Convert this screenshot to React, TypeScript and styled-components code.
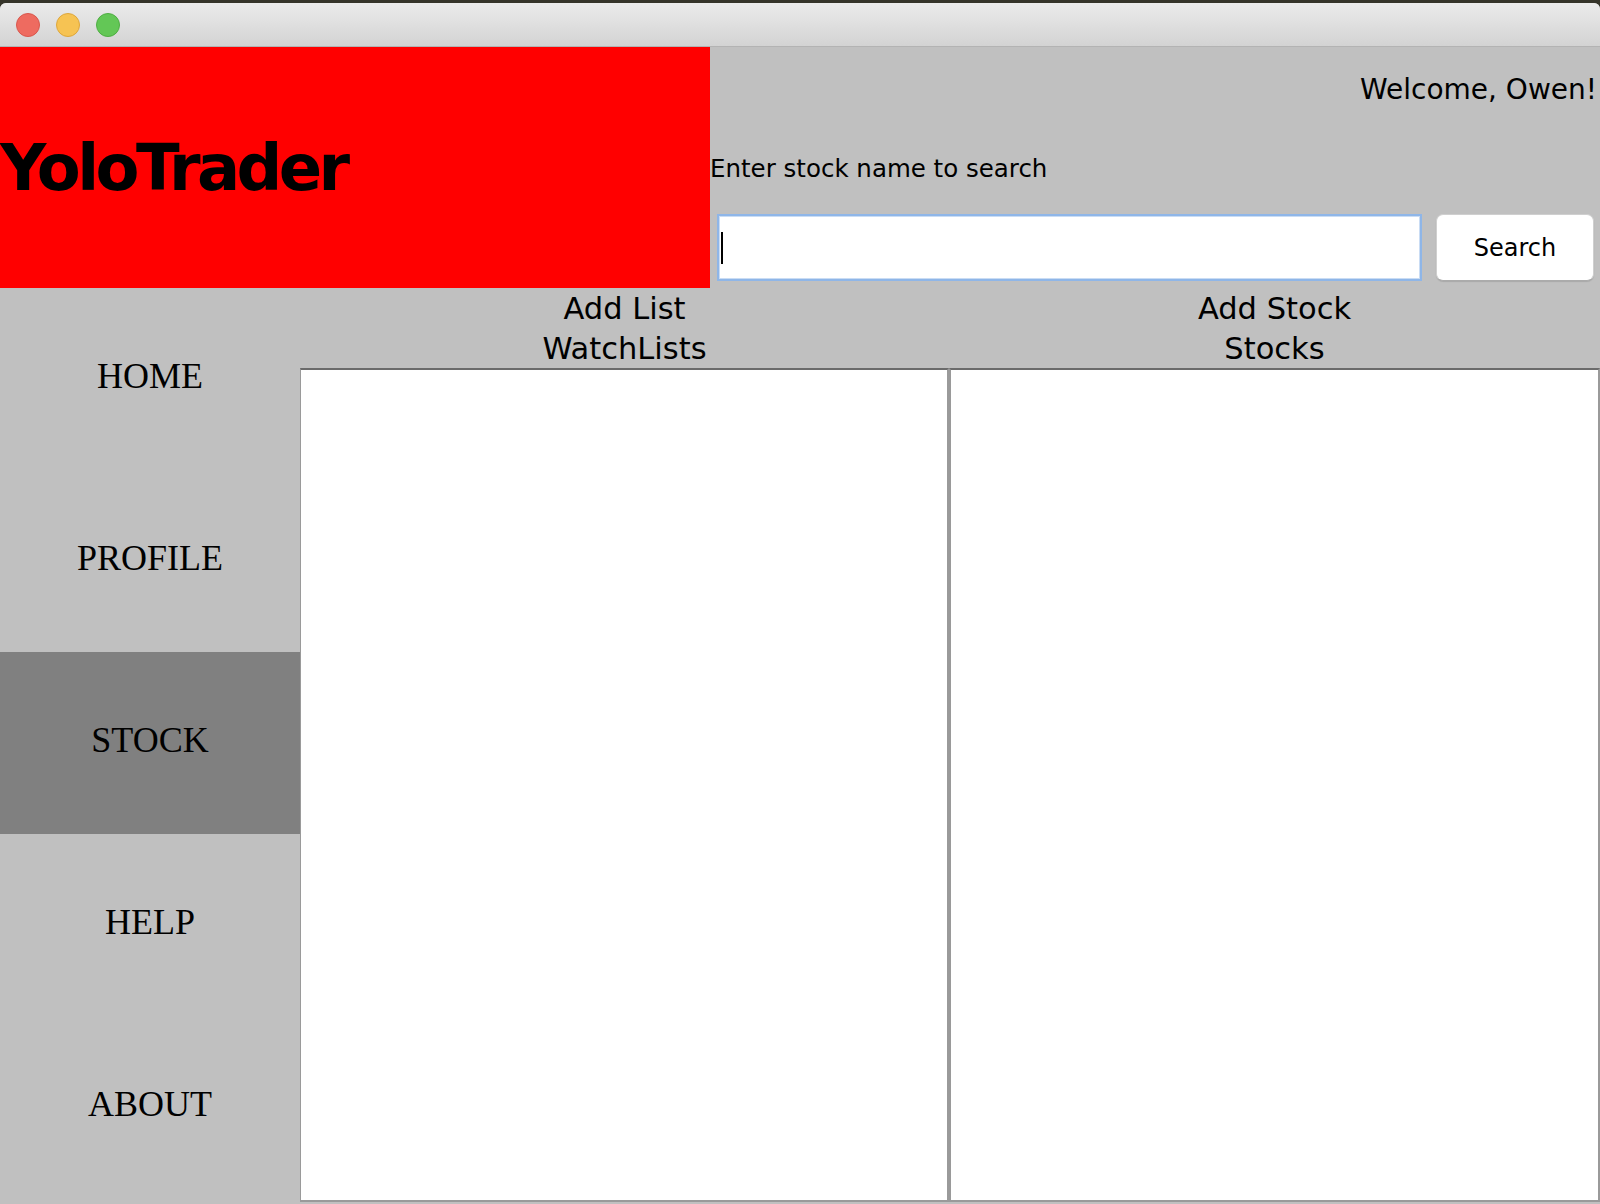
import styled, { createGlobalStyle } from 'styled-components'

const GlobalStyle = createGlobalStyle`
  html, body {
    margin: 0;
    padding: 0;
    background: #35342a;
  }
  * {
    box-sizing: border-box;
  }
`

const UI_FONT = `"DejaVu Sans", "Open Sans", sans-serif`

const Desktop = styled.div`
  width: 1600px;
  height: 1204px;
  padding-top: 3px;
  background: #35342a;
  overflow: hidden;
`

const Window = styled.div`
  height: 100%;
  display: flex;
  flex-direction: column;
  border-radius: 6px 6px 0 0;
  overflow: hidden;
  background: #c0c0c0;
`

const TitleBar = styled.div`
  height: 44px;
  flex-shrink: 0;
  display: flex;
  align-items: center;
  gap: 16px;
  padding-left: 16px;
  background: linear-gradient(#ebebeb, #d3d3d3);
  border-bottom: 1px solid #b3b3b3;
`

const Light = styled.span<{ $fill: string; $edge: string }>`
  width: 24px;
  height: 24px;
  border-radius: 50%;
  background: ${(p) => p.$fill};
  border: 1px solid ${(p) => p.$edge};
`

const Header = styled.div`
  height: 241px;
  flex-shrink: 0;
  display: grid;
  grid-template-columns: 710px 1fr;
`

const Brand = styled.div`
  background: #ff0000;
  display: flex;
  align-items: center;
`

const BrandName = styled.h1`
  margin: 0;
  font-family: ${UI_FONT};
  font-weight: bold;
  font-size: 64px;
  letter-spacing: -3.6px;
  color: #000;
`

const SearchPanel = styled.div`
  background: #c0c0c0;
  display: grid;
  grid-template-rows: repeat(3, 1fr);
  font-family: ${UI_FONT};
  color: #000;
`

const Welcome = styled.div`
  display: flex;
  align-items: center;
  justify-content: flex-end;
  padding: 4px 3px 0 0;
  font-size: 28px;
`

const SearchLabel = styled.label`
  display: flex;
  align-items: center;
  padding-top: 2px;
  font-size: 24.5px;
`

const SearchRow = styled.div`
  display: flex;
  align-items: center;
  gap: 14px;
  padding: 0 6px 0 7px;
`

const SearchInput = styled.div`
  position: relative;
  flex: 1;
  height: 67px;
  background: #fff;
  border: 2px solid #8fb6e8;
  box-shadow: inset 0 0 0 1px #c9dcf4;
`

const Caret = styled.span`
  position: absolute;
  left: 2px;
  top: 16px;
  width: 2px;
  height: 32px;
  background: #000;
`

const SearchButton = styled.button`
  width: 158px;
  height: 67px;
  background: #fff;
  border: 1px solid #cfcfcf;
  border-bottom-color: #ababab;
  border-radius: 7px;
  box-shadow: 0 1px 1px rgba(0, 0, 0, 0.12);
  font-family: ${UI_FONT};
  font-size: 24px;
  color: #000;
  padding: 0;
`

const Body = styled.div`
  flex: 1;
  display: flex;
  min-height: 0;
`

const Sidebar = styled.nav`
  width: 300px;
  flex-shrink: 0;
  display: flex;
  flex-direction: column;
`

const NavItem = styled.div<{ $active?: boolean }>`
  height: 182px;
  flex-shrink: 0;
  display: flex;
  align-items: center;
  justify-content: center;
  padding-bottom: 7px;
  background: ${(p) => (p.$active ? '#808080' : '#c0c0c0')};
  font-family: "Liberation Serif", "Times New Roman", serif;
  font-size: 36px;
  color: #000;
`

const Main = styled.div`
  flex: 1;
  display: grid;
  grid-template-columns: 649px 1fr;
  padding-bottom: 2px;
`

const Column = styled.section`
  display: flex;
  flex-direction: column;
  min-height: 0;
`

const ColumnHeader = styled.div`
  height: 80px;
  display: flex;
  flex-direction: column;
  align-items: center;
  padding-top: 1px;
  font-family: ${UI_FONT};
  font-size: 30.5px;
  line-height: 40px;
  color: #000;
`

const ListBox = styled.div<{ $side: 'left' | 'right' }>`
  flex: 1;
  background: #fff;
  border-top: 2px solid #6b6b6b;
  border-bottom: 2px solid #9a9a9a;
  border-left: ${(p) => (p.$side === 'left' ? '1px' : '2px')} solid #9a9a9a;
  border-right: 2px solid #9a9a9a;
`

const navItems = ['HOME', 'PROFILE', 'STOCK', 'HELP', 'ABOUT']

const App = () => {
  return (
    <>
      <GlobalStyle />
      <Desktop>
        <Window>
          <TitleBar>
            <Light $fill="#ee6b60" $edge="#d9574d" />
            <Light $fill="#f6c353" $edge="#dea73c" />
            <Light $fill="#63c756" $edge="#4fae43" />
          </TitleBar>

          <Header>
            <Brand>
              <BrandName>YoloTrader</BrandName>
            </Brand>
            <SearchPanel>
              <Welcome>Welcome, Owen!</Welcome>
              <SearchLabel>Enter stock name to search</SearchLabel>
              <SearchRow>
                <SearchInput>
                  <Caret />
                </SearchInput>
                <SearchButton>Search</SearchButton>
              </SearchRow>
            </SearchPanel>
          </Header>

          <Body>
            <Sidebar>
              {navItems.map((item) => (
                <NavItem key={item} $active={item === 'STOCK'}>
                  {item}
                </NavItem>
              ))}
            </Sidebar>
            <Main>
              <Column>
                <ColumnHeader>
                  <span>Add List</span>
                  <span>WatchLists</span>
                </ColumnHeader>
                <ListBox $side="left" />
              </Column>
              <Column>
                <ColumnHeader>
                  <span>Add Stock</span>
                  <span>Stocks</span>
                </ColumnHeader>
                <ListBox $side="right" />
              </Column>
            </Main>
          </Body>
        </Window>
      </Desktop>
    </>
  )
}

export default App
